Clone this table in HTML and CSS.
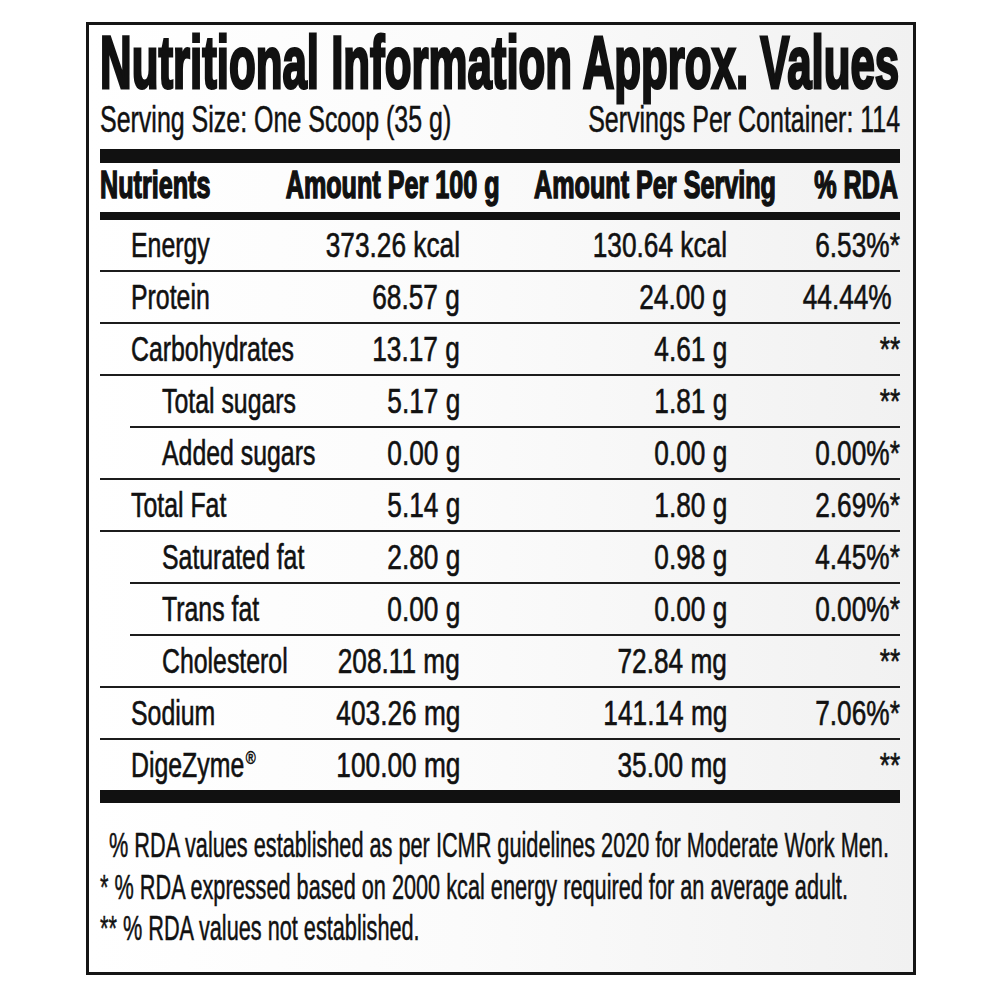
FILE: index.html
```html
<!DOCTYPE html>
<html lang="en">
<head>
<meta charset="utf-8">
<title>Nutritional Information</title>
<link rel="stylesheet" href="styles.css">
</head>
<body>
<div class="page">
  <section class="label">
    <h1 class="title"><span class="sx">Nutritional Information Approx. Values</span></h1>
    <div class="serving">
      <div class="cell-l"><span class="sx sx-l">Serving Size: One Scoop (35 g)</span></div>
      <div class="cell-r"><span class="sx sx-r">Servings Per Container: 114</span></div>
    </div>
    <div class="bar bar-top"></div>
    <div class="head">
      <div class="hc hc-l"><span class="sx sx-l">Nutrients</span></div>
      <div class="hc"><span class="sx sx-r">Amount Per 100 g</span></div>
      <div class="hc"><span class="sx sx-r">Amount Per Serving</span></div>
      <div class="hc hc-last"><span class="sx sx-r">% RDA</span></div>
    </div>
    <div class="bar bar-mid"></div>
    <div class="rows">
      <div class="row">
        <div class="nm"><span class="sx">Energy</span></div>
        <div class="num"><span class="sx">373.26 kcal</span></div>
        <div class="num"><span class="sx">130.64 kcal</span></div>
        <div class="num"><span class="sx">6.53%*</span></div>
      </div>
      <div class="row">
        <div class="nm"><span class="sx">Protein</span></div>
        <div class="num"><span class="sx">68.57 g</span></div>
        <div class="num"><span class="sx">24.00 g</span></div>
        <div class="num num-plain"><span class="sx">44.44%</span></div>
      </div>
      <div class="row">
        <div class="nm"><span class="sx">Carbohydrates</span></div>
        <div class="num"><span class="sx">13.17 g</span></div>
        <div class="num"><span class="sx">4.61 g</span></div>
        <div class="num"><span class="sx">**</span></div>
      </div>
      <div class="row row-indent">
        <div class="nm nm-sub"><span class="sx">Total sugars</span></div>
        <div class="num"><span class="sx">5.17 g</span></div>
        <div class="num"><span class="sx">1.81 g</span></div>
        <div class="num"><span class="sx">**</span></div>
      </div>
      <div class="row">
        <div class="nm nm-sub"><span class="sx">Added sugars</span></div>
        <div class="num"><span class="sx">0.00 g</span></div>
        <div class="num"><span class="sx">0.00 g</span></div>
        <div class="num"><span class="sx">0.00%*</span></div>
      </div>
      <div class="row">
        <div class="nm"><span class="sx">Total Fat</span></div>
        <div class="num"><span class="sx">5.14 g</span></div>
        <div class="num"><span class="sx">1.80 g</span></div>
        <div class="num"><span class="sx">2.69%*</span></div>
      </div>
      <div class="row row-indent">
        <div class="nm nm-sub"><span class="sx">Saturated fat</span></div>
        <div class="num"><span class="sx">2.80 g</span></div>
        <div class="num"><span class="sx">0.98 g</span></div>
        <div class="num"><span class="sx">4.45%*</span></div>
      </div>
      <div class="row row-indent">
        <div class="nm nm-sub"><span class="sx">Trans fat</span></div>
        <div class="num"><span class="sx">0.00 g</span></div>
        <div class="num"><span class="sx">0.00 g</span></div>
        <div class="num"><span class="sx">0.00%*</span></div>
      </div>
      <div class="row">
        <div class="nm nm-sub"><span class="sx">Cholesterol</span></div>
        <div class="num"><span class="sx">208.11 mg</span></div>
        <div class="num"><span class="sx">72.84 mg</span></div>
        <div class="num"><span class="sx">**</span></div>
      </div>
      <div class="row">
        <div class="nm"><span class="sx">Sodium</span></div>
        <div class="num"><span class="sx">403.26 mg</span></div>
        <div class="num"><span class="sx">141.14 mg</span></div>
        <div class="num"><span class="sx">7.06%*</span></div>
      </div>
      <div class="row row-last">
        <div class="nm"><span class="sx">DigeZyme<sup class="reg">®</sup></span></div>
        <div class="num"><span class="sx">100.00 mg</span></div>
        <div class="num"><span class="sx">35.00 mg</span></div>
        <div class="num"><span class="sx">**</span></div>
      </div>
    </div>
    <div class="bar bar-bottom"></div>
    <div class="notes">
      <p class="note note-first"><span class="sx">% RDA values established as per ICMR guidelines 2020 for Moderate Work Men.</span></p>
      <p class="note"><span class="sx">* % RDA expressed based on 2000 kcal energy required for an average adult.</span></p>
      <p class="note"><span class="sx">** % RDA values not established.</span></p>
    </div>
  </section>
</div>
</body>
</html>
```

FILE: styles.css
```css
* {
  box-sizing: border-box;
  margin: 0;
  padding: 0;
}

html,
body {
  background: #ffffff;
}

body {
  font-family: "Liberation Sans", Arial, sans-serif;
  color: #111111;
}

.page {
  padding: 22px 0 0 86px;
}

.label {
  width: 830px;
  height: 953px;
  border: 3px solid #151515;
  padding: 0 13px 0 11px;
  background: linear-gradient(90deg, #ffffff 0%, #fbfbfb 45%, #f1f1f1 100%);
  overflow: hidden;
}

/* condensed text: glyphs are narrowed horizontally */
.sx {
  display: inline-block;
  white-space: nowrap;
  flex: none;
  transform-origin: 0 50%;
}

.sx-r {
  transform-origin: 100% 50%;
}

/* title */
.title {
  font-size: 74px;
  line-height: 75px;
  font-weight: 700;
}

.title .sx {
  transform: scaleX(0.592);
  -webkit-text-stroke: 3px #111111;
}

/* serving line */
.serving {
  display: grid;
  grid-template-columns: minmax(0, 1fr) minmax(0, 1fr);
  font-size: 37px;
  line-height: 40px;
}

.serving .sx {
  transform: scaleX(0.675);
  -webkit-text-stroke: 0.5px #111111;
}

.cell-l {
  display: flex;
  justify-content: flex-start;
  min-width: 0;
}

.cell-r {
  display: flex;
  justify-content: flex-end;
  min-width: 0;
}

/* bars */
.bar {
  background: #111111;
}

.bar-top {
  margin-top: 9px;
  height: 14px;
}

.bar-mid {
  margin-top: 6px;
  height: 8px;
}

.bar-bottom {
  height: 13px;
}

/* header row */
.head {
  display: grid;
  grid-template-columns: 200px 200px 276px minmax(0, 1fr);
  font-size: 39px;
  line-height: 43px;
  font-weight: 700;
}

.hc {
  display: flex;
  justify-content: flex-end;
  min-width: 0;
}

.hc-l {
  justify-content: flex-start;
}

.hc-last {
  padding-right: 2px;
}

.head .sx {
  transform: scaleX(0.645);
  -webkit-text-stroke: 1.6px #111111;
}

/* data rows */
.row {
  display: grid;
  grid-template-columns: 200px 160px 267px 173px;
  height: 52px;
  border-bottom: 2px solid #1c1c1c;
  font-size: 35px;
  line-height: 50px;
}

.row-indent {
  border-bottom-color: transparent;
  background: linear-gradient(#1c1c1c, #1c1c1c) 30px 100% / calc(100% - 30px) 2px no-repeat border-box;
}

.row-last {
  height: 50px;
  border-bottom: 0;
}

.nm {
  display: flex;
  justify-content: flex-start;
  padding-left: 31px;
  min-width: 0;
}

.nm-sub {
  padding-left: 62px;
}

.nm .sx {
  transform: scaleX(0.71);
  -webkit-text-stroke: 0.6px #111111;
}

.num {
  display: flex;
  justify-content: flex-end;
  min-width: 0;
}

.num-plain {
  padding-right: 8px;
}

.num .sx {
  transform: scaleX(0.75);
  transform-origin: 100% 50%;
  -webkit-text-stroke: 0.6px #111111;
}

.reg {
  font-size: 19px;
  line-height: 0;
  vertical-align: 13px;
  margin-left: 2px;
}

/* footnotes */
.notes {
  margin-top: 21px;
  font-size: 35px;
  line-height: 41.5px;
}

.note {
  display: flex;
}

.note-first {
  padding-left: 9px;
}

.note .sx {
  transform: scaleX(0.62);
  -webkit-text-stroke: 0.5px #111111;
}
```
